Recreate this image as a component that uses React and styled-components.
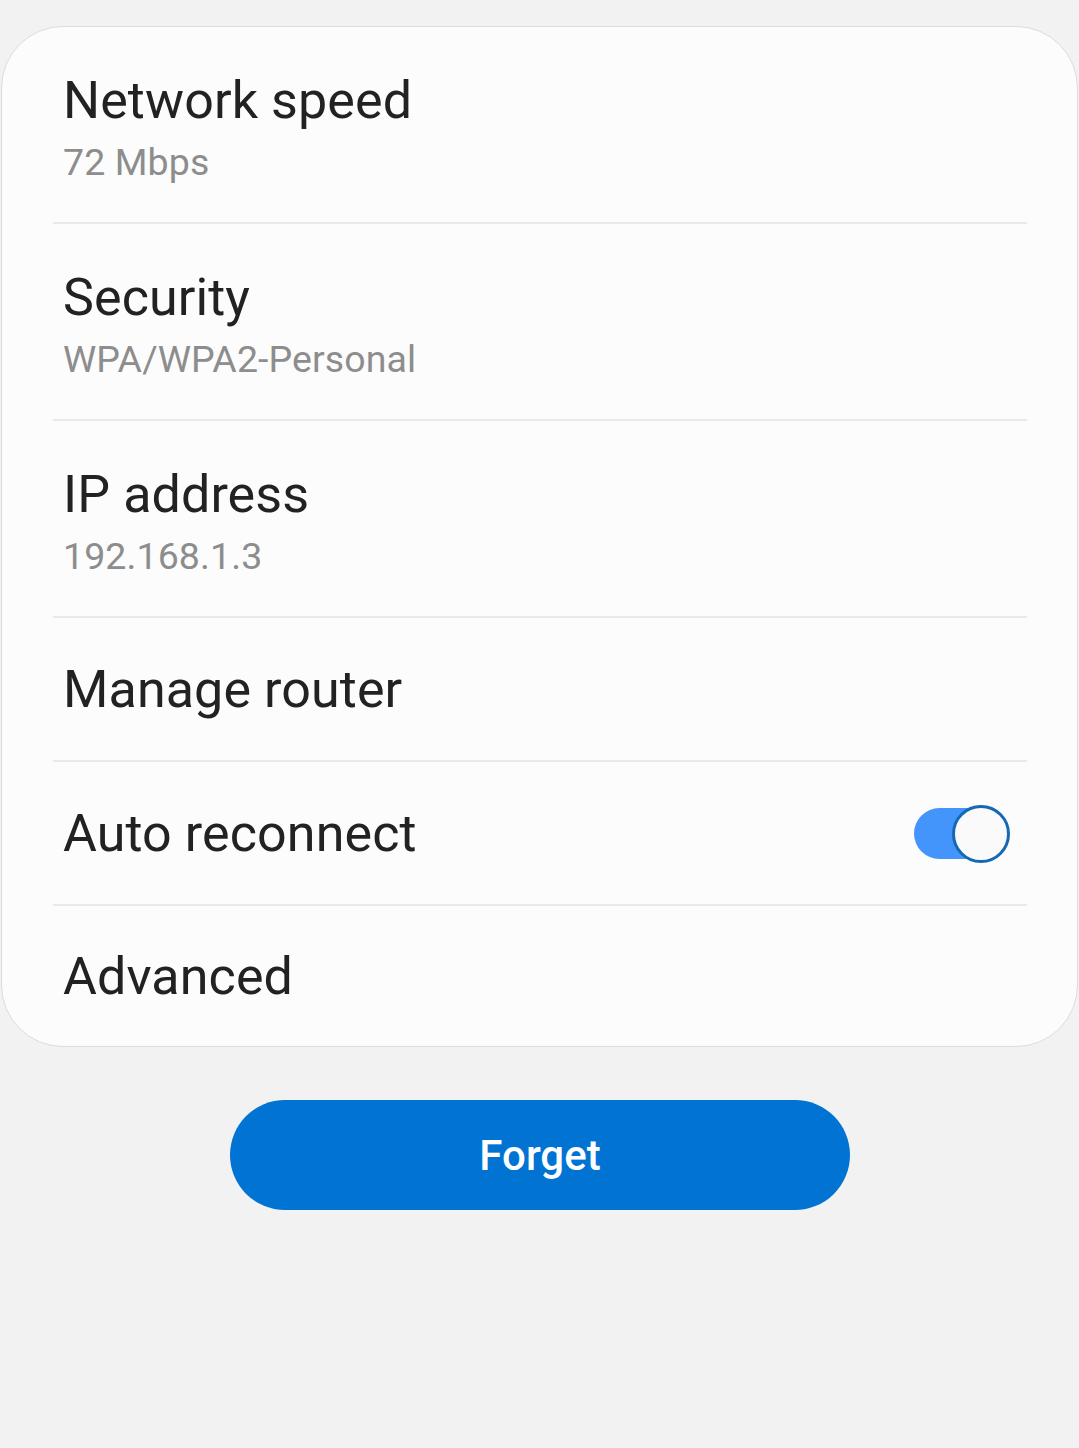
import React from 'react';
import styled, { createGlobalStyle } from 'styled-components';

const GlobalStyle = createGlobalStyle`
  html, body {
    margin: 0;
    padding: 0;
    background: #f2f2f2;
  }
  body {
    font-family: Roboto, "Noto Sans", sans-serif;
    -webkit-font-smoothing: antialiased;
  }
`;

const Page = styled.div`
  width: 1079px;
  min-height: 1448px;
  background: #f2f2f2;
  padding-top: 26px;
  box-sizing: border-box;
`;

const Card = styled.div`
  margin-left: 1px;
  width: 1077px;
  box-sizing: border-box;
  background: #fcfcfc;
  border: 1px solid #dcdcdc;
  border-radius: 62px;
  overflow: hidden;
`;

const Row = styled.div`
  display: flex;
  align-items: center;
  justify-content: space-between;
  box-sizing: border-box;
  height: ${p => (p.$double ? 195 : 142)}px;
  padding: ${p => (p.$double ? '43px 67px 37px 61px' : '1px 67px 0 61px')};

  &:last-child {
    height: 140px;
  }
`;

const Divider = styled.div`
  height: 2px;
  margin: 0 50px 0 51px;
  background: #e9e9e9;
`;

const TextCol = styled.div`
  display: flex;
  flex-direction: column;
`;

const Title = styled.div`
  font-size: 52px;
  line-height: 62px;
  color: #222222;
  letter-spacing: 0.1px;
`;

const Subtitle = styled.div`
  margin-top: 7px;
  font-size: 37.5px;
  line-height: 46px;
  color: #8d8d8d;
  letter-spacing: 0.1px;
`;

const Toggle = styled.div`
  position: relative;
  width: 96px;
  height: 58px;
  display: flex;
  align-items: center;
`;

const Track = styled.div`
  width: 80px;
  height: 51px;
  border-radius: 26px;
  background: #4395fb;
`;

const Thumb = styled.div`
  position: absolute;
  right: 0;
  top: 0;
  width: 58px;
  height: 58px;
  box-sizing: border-box;
  border-radius: 50%;
  border: 3px solid #1569b4;
  background: #fafafa;
`;

const ButtonWrap = styled.div`
  display: flex;
  justify-content: center;
  padding-top: 53px;
  padding-left: 1px;
`;

const ForgetButton = styled.button`
  width: 620px;
  height: 110px;
  border: none;
  border-radius: 55px;
  background: #0174d3;
  color: #ffffff;
  font-family: Roboto, "Noto Sans", sans-serif;
  font-size: 42px;
  font-weight: 500;
  padding: 0;
  cursor: pointer;
`;

const items = [
  { title: 'Network speed', sub: '72 Mbps' },
  { title: 'Security', sub: 'WPA/WPA2-Personal' },
  { title: 'IP address', sub: '192.168.1.3' },
  { title: 'Manage router' },
  { title: 'Auto reconnect', toggle: true },
  { title: 'Advanced' },
];

export default function App() {
  return (
    <>
      <GlobalStyle />
      <Page>
        <Card>
          {items.map((item, idx) => (
            <React.Fragment key={idx}>
              {idx > 0 && <Divider />}
              <Row $double={!!item.sub}>
                <TextCol>
                  <Title>{item.title}</Title>
                  {item.sub && <Subtitle>{item.sub}</Subtitle>}
                </TextCol>
                {item.toggle && (
                  <Toggle>
                    <Track />
                    <Thumb />
                  </Toggle>
                )}
              </Row>
            </React.Fragment>
          ))}
        </Card>
        <ButtonWrap>
          <ForgetButton>Forget</ForgetButton>
        </ButtonWrap>
      </Page>
    </>
  );
}
